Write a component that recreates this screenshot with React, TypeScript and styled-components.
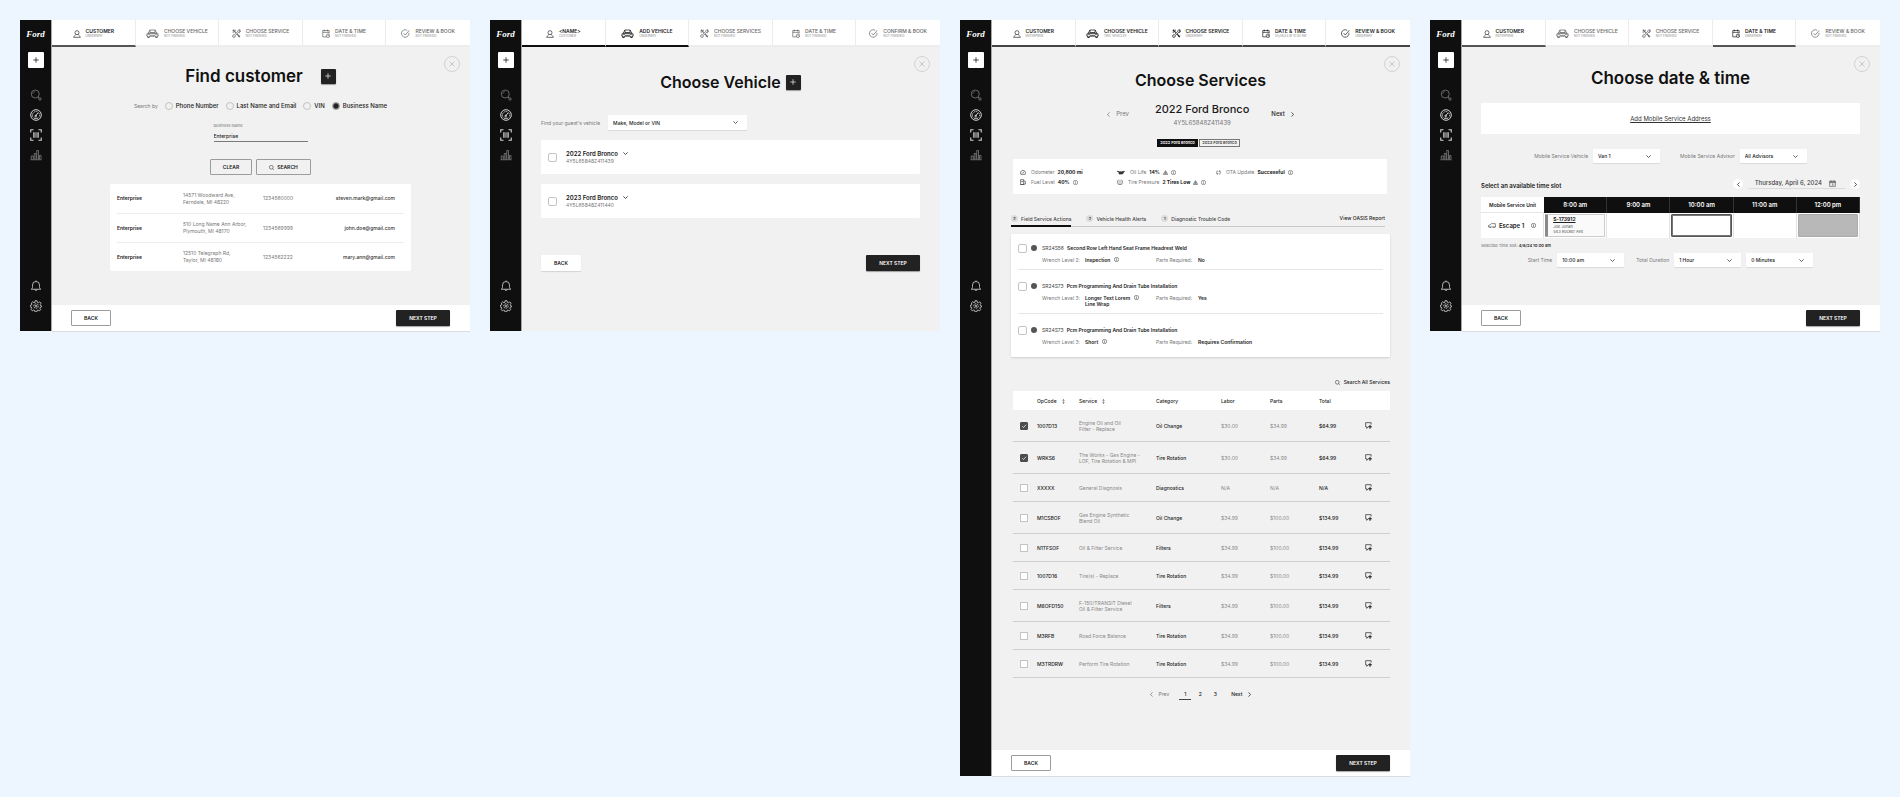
import React from "react";
import styled, { createGlobalStyle, css } from "styled-components";

const GlobalStyle = createGlobalStyle`
  *, *::before, *::after { box-sizing: border-box; }
  body { margin: 0; background: #edf6ff; }
  body, button, input, select, table {
    font-family: Inter, "Liberation Sans", sans-serif;
    font-size: 5px;
    line-height: 6px;
    color: #1a1a1a;
  }
  button { border: 0; padding: 0; margin: 0; background: none; cursor: pointer; }
  svg { display: block; flex: none; }
  h1, h2, h3, p, ul { margin: 0; padding: 0; font-weight: inherit; font-size: inherit; }
`;

/* ---------- icons ---------- */

type IconProps = { w?: number; h?: number; s?: number; sw?: number };

const Icon = ({ w = 12, h = w, s = 24, sw = 1.6, children }: IconProps & { children: React.ReactNode }) => (
  <svg width={w} height={h} viewBox={`0 0 ${(s * w) / h} ${s}`} fill="none" stroke="currentColor" strokeWidth={sw} aria-hidden="true">
    {children}
  </svg>
);

const PlusIcon = () => <Icon w={6} h={6} s={12} sw={1.6}><path d="M6 0.5v11M0.5 6h11" /></Icon>;
const CloseIcon = () => <Icon w={6} h={6} s={12} sw={1.2}><path d="M1 1l10 10M11 1L1 11" /></Icon>;
const SearchIcon = () => (
  <Icon sw={1.4}>
    <circle cx="10.5" cy="10" r="8" />
    <path d="M5.5 10a5 5 0 0 1 5-5" strokeWidth={0.9} />
    <path d="M16 16l2 2" />
    <circle cx="20" cy="20" r="2.4" />
  </Icon>
);
const GaugeIcon = () => (
  <Icon sw={2}>
    <circle cx="12" cy="12" r="10.6" />
    <path d="M6.5 17a7.2 7.2 0 1 1 11 0" strokeDasharray="2.4 1.4" />
    <path d="M11 14l5-6" />
    <circle cx="11.4" cy="14" r="1.6" />
    <path d="M8 18.5h8" />
  </Icon>
);
const ScanIcon = () => (
  <Icon sw={2.2}>
    <path d="M1.5 7V1.5H7M17 1.5h5.5V7M22.5 17v5.500H17M7 22.500H1.500V17" />
    <path d="M7 6.500v11M9.500 6.500v11M12 6.500v11M14.500 6.500v11M17 6.500v11" strokeWidth={1.5} />
  </Icon>
);
const ChartIcon = () => (
  <Icon sw={1.4}>
    <path d="M2.500 21v-7h4v7M8.500 21V9h3.500v12M13.500 21V3h3.500v18M19 21V13h3v8M1 21.500h22" />
  </Icon>
);
const BellIcon = () => (
  <Icon sw={1.6}>
    <path d="M2.500 18.500h19c-2-1.200-2.500-2.500-2.500-5V10a7 7 0 0 0-14 0v3.500c0 2.500-.5 3.800-2.500 5z" />
    <path d="M9.500 19a2.600 2.600 0 0 0 5 0M12 3V1" />
  </Icon>
);
const GearIcon = () => (
  <Icon sw={1.7}>
    <path d="M10 1.500h4l.6 3 2.200 1 2.700-1.700 2.500 2.700-1.600 2.600.9 2.300 2.200.6v1.500l-2.800.8-.9 2.200 1.600 2.600-2.600 2.600-2.600-1.600-2.200.9-.6 3h-3.200l-.7-3-2.200-.9-2.600 1.600-2.500-2.700 1.600-2.500-.9-2.200-3-.7v-2.600l3-.7.9-2.200L2.800 5.900 5.300 3.600l2.600 1.700 2-.9z" />
    <circle cx="12" cy="12" r="4.600" strokeDasharray="3 1.200" />
    <circle cx="12" cy="12" r="1.800" />
  </Icon>
);
const PersonIcon = () => (
  <Icon w={8} sw={2}>
    <circle cx="12" cy="8" r="6" />
    <path d="M8.500 13.500c-1 2-4.500 2.500-6.500 8.500h20c-2-6-5.500-6.500-6.500-8.500" />
  </Icon>
);
const CarIcon = () => (
  <Icon w={13} h={9} s={18} sw={1.500}>
    <path d="M5 8l2.500-6h11L21 8M5 8c-3 0-3.500 2-3.500 6h3M21 8c3 0 3.500 2 3.500 6h-3" />
    <path d="M2.500 10.500h4l1.500 2h10l1.500-2h4M7 14.500h12M8 2v5h10V2" />
    <path d="M3.500 14v3h3v-3M19.500 14v3h3v-3M4 8.500h18" strokeWidth={2} />
  </Icon>
);
const ToolsIcon = () => (
  <Icon w={9} sw={2}>
    <path d="M3 2.500l7 7M14 14l7 7.500M2 5.500L5.500 2" strokeWidth={3} />
    <path d="M15.500 6.500a4.500 4.500 0 0 1 6-4.500l-2.500 3 .5 1.500 2-.3 1.200-1.700a4.500 4.500 0 0 1-6 5L8.500 18a3.500 3.500 0 1 1-2.500-2.500L15.500 6.500z" />
    <path d="M20.500 17.500l-4 4M1.500 8.500h4M8.500 1.500v4" />
  </Icon>
);
const CalendarIcon = () => (
  <Icon w={8} h={9} s={24} sw={1.900}>
    <path d="M12 21H2V4h17v8M2 9h17M6 1.500v5M14.500 1.500v5" />
    <circle cx="16" cy="18" r="4.600" />
    <path d="M16 15.500V18h2" />
  </Icon>
);
const CheckCircleIcon = () => (
  <Icon w={9} sw={1.900}>
    <path d="M21 10a10 10 0 1 1-4.500-6.500" />
    <path d="M7 11l4.500 5L22 3.500" />
  </Icon>
);
const ChevronDown = () => <Icon w={5} h={3} s={6} sw={1.500}><path d="M0.800 0.800L5 5l4.200-4.200" /></Icon>;
const ChevronLeft = () => <Icon w={3} h={5} s={10} sw={1.500}><path d="M5 0.800L1 5l4 4.200" /></Icon>;
const ChevronRight = () => <Icon w={3} h={5} s={10} sw={1.500}><path d="M1 0.800L5 5l-4 4.200" /></Icon>;
const InfoIcon = () => (
  <Icon w={5} s={12} sw={1.200}><circle cx="6" cy="6" r="5.200" /><path d="M6 5v4M6 2.600v1.300" /></Icon>
);
const WarnIcon = () => (
  <Icon w={5} s={12} sw={1.200}><path d="M6 1.500L11.300 10.500H.7z" fill="currentColor" fillOpacity={0.25} /><path d="M6 4.500v3.200M6 8.300v1.200" /></Icon>
);
const LensIcon = () => (
  <Icon w={5} s={12} sw={1.200}><circle cx="5.500" cy="5.500" r="4.500" /><path d="M8.800 8.800L11.500 11.500" /></Icon>
);
const OdometerIcon = () => (
  <Icon w={6} s={14} sw={1.400}><path d="M2 12.500a6 6 0 1 1 10 0zM7 9.500l2.500-3.500M4 9.500h2" /></Icon>
);
const FuelIcon = () => (
  <Icon w={6} s={14} sw={1.500}><path d="M1.500 13V1.500h7V13zM3 6h4M8.500 4l4 1.500V12H9M1 13h8" /></Icon>
);
const OilIcon = () => (
  <Icon w={8} h={5} s={10} sw={1.400}><path d="M1 2l3 1.500h6L15 2.500l-4 5.500H4V4L1 3z" fill="currentColor" /></Icon>
);
const TireIcon = () => (
  <Icon w={6} s={14} sw={1.500}><path d="M4 1.500C.5 4.500 1 10 3.500 12.500h7c2.500-2.500 3-8-.5-11M7 3.500V8M7 9.300v1.400" /></Icon>
);
const UpdateIcon = () => (
  <Icon w={5} s={14} sw={1.600}><path d="M5 1.800a5.400 5.400 0 0 0-1 9.300M9 12.200a5.400 5.400 0 0 0 1-9.300M2 11.500h3V8.500M12 2.500H9v3" /></Icon>
);
const SortIcon = () => (
  <Icon w={3} h={5} s={12} sw={1.300}><path d="M3.600 1v10M1 4l2.600-3L6.200 4M1 8l2.600 3L6.200 8" /></Icon>
);
const NoteIcon = () => (
  <Icon w={7} s={16} sw={1.500}>
    <path d="M14 5.500V1.500H1.500v9.500h2.500v3.500l3-3.500" />
    <path d="M11.500 6.500v8M7.500 10.500h8M9.500 12.500l2 2 2-2" strokeWidth={2} />
  </Icon>
);
const DateIcon = () => (
  <Icon w={7} s={16} sw={1.400}><path d="M1.500 2.500h13v12h-13zM1.500 4.500h13M1.500 6h13M4.500 1v3M11.500 1v3M7 9h2v4" /></Icon>
);
const VanIcon = () => (
  <Icon w={8} h={5} s={12} sw={1.200}><path d="M1 9.500V6l3.500-1L8 1.500h9.500L18 9.500zM4 9.500a1.500 1.500 0 0 0 3 0M13 9.500a1.500 1.500 0 0 0 3 0" /></Icon>
);

/* ---------- shell ---------- */

const Board = styled.main`
  display: grid;
  grid-template-columns: repeat(auto-fit, minmax(420px, 1fr));
  align-items: start;
  gap: 20px;
  padding: 20px;
`;

const Frame = styled.section`
  display: grid;
  grid-template-columns: 32px minmax(0, 1fr);
  background: #f1f1f1;
`;

const Sidebar = styled.aside`
  display: flex;
  flex-direction: column;
  align-items: center;
  padding: 9px 0 19px;
  background: #0f0f0f;
  border-right: 1px solid #a8a8a8;
`;

const Brand = styled.a`
  height: 10px;
  font: italic 700 9px/10px "Liberation Serif", serif;
  color: #fff;
  text-decoration: none;
`;

const SideAdd = styled.button`
  display: grid;
  place-items: center;
  width: 16px;
  height: 16px;
  margin-top: 13px;
  border-radius: 1px;
  background: #fff;
  color: #222;
`;

const SideGroup = styled.nav<{ $top: number }>`
  display: flex;
  flex-direction: column;
  gap: 8px;
  margin-top: ${(p) => p.$top}px;
`;

const SideLink = styled.button<{ $dim?: boolean }>`
  width: 12px;
  height: 12px;
  color: ${(p) => (p.$dim ? "#8a8a8a" : "#d4d4d4")};
`;

const Column = styled.div`
  display: flex;
  flex-direction: column;
`;

const Steps = styled.nav`
  display: grid;
  grid-template-columns: repeat(5, 1fr);
`;

const Step = styled.button<{ $line: string; $on: boolean }>`
  display: flex;
  align-items: center;
  justify-content: center;
  gap: 5px;
  height: 27px;
  padding-top: 2px;
  background: #fff;
  border-right: 1px solid #ececec;
  border-bottom: 2px solid ${(p) => p.$line};
  color: ${(p) => (p.$on ? "#222" : "#666")};
  text-align: left;
  &:last-child { border-right: 0; }
`;

const StepName = styled.span<{ $on: boolean }>`
  display: block;
  font-weight: ${(p) => (p.$on ? 600 : 500)};
  line-height: 6px;
  white-space: nowrap;
`;

const StepNote = styled.span`
  display: block;
  font-size: 3px;
  line-height: 5px;
  color: #888;
`;

const Body = styled.div<{ $top: number; $bottom?: number }>`
  position: relative;
  flex: 1;
  display: flex;
  flex-direction: column;
  align-items: center;
  padding: ${(p) => p.$top}px 20px ${(p) => p.$bottom ?? 0}px 19px;
`;

const CloseButton = styled.button`
  position: absolute;
  top: 9px;
  right: 10px;
  display: grid;
  place-items: center;
  width: 16px;
  height: 16px;
  border: 1px solid #d2d2d2;
  border-radius: 50%;
  color: #aaa;
`;

const TitleRow = styled.div<{ $gap?: number }>`
  display: flex;
  align-items: center;
  gap: ${(p) => p.$gap ?? 0}px;
`;

const Title = styled.h1<{ $large?: boolean }>`
  font-size: ${(p) => (p.$large ? 17 : 16)}px;
  line-height: 20px;
  font-weight: 600;
  color: #111;
  white-space: nowrap;
`;

const DarkAdd = styled.button`
  display: grid;
  place-items: center;
  width: 15px;
  height: 15px;
  border-radius: 1px;
  background: #222;
  color: #ddd;
  box-shadow: 0 1px 1px rgba(0, 0, 0, 0.35);
`;

const Button = styled.button<{ $kind?: "dark" | "plain"; $width: number }>`
  display: inline-flex;
  align-items: center;
  justify-content: center;
  gap: 3px;
  width: ${(p) => p.$width}px;
  height: 16px;
  border-radius: 1px;
  font-weight: 600;
  ${(p) =>
    p.$kind === "dark"
      ? css`background: #222; color: #fff; box-shadow: 0 1px 1px rgba(0, 0, 0, 0.35);`
      : p.$kind === "plain"
        ? css`background: #fff; box-shadow: 0 1px 1px rgba(0, 0, 0, 0.12);`
        : css`background: #fff; border: 1px solid #9c9c9c;`}
`;

const ButtonBar = styled.div<{ $top?: number }>`
  display: flex;
  align-self: stretch;
  justify-content: space-between;
  margin-top: ${(p) => p.$top ?? 0}px;
`;

const Footer = styled.footer`
  display: flex;
  align-items: center;
  justify-content: space-between;
  height: 26px;
  padding: 0 20px 0 19px;
  background: #fff;
  box-shadow: 0 1px 0 #d9dde1;
`;

type StepInfo = { name: string; note: string; on?: boolean; line?: boolean };

const stepIcons = [PersonIcon, CarIcon, ToolsIcon, CalendarIcon, CheckCircleIcon];

function Screen({
  steps, line, top, bottom, footer = true, children,
}: { steps: StepInfo[]; line: string; top: number; bottom?: number; footer?: boolean; children: React.ReactNode }) {
  return (
    <Frame>
      <Sidebar>
        <Brand href="#home">Ford</Brand>
        <SideAdd aria-label="New booking"><PlusIcon /></SideAdd>
        <SideGroup $top={21}>
          <SideLink aria-label="Search" $dim><SearchIcon /></SideLink>
          <SideLink aria-label="Dashboard"><GaugeIcon /></SideLink>
          <SideLink aria-label="Scan"><ScanIcon /></SideLink>
          <SideLink aria-label="Reports" $dim><ChartIcon /></SideLink>
        </SideGroup>
        <SideGroup $top={119}>
          <SideLink aria-label="Notifications"><BellIcon /></SideLink>
          <SideLink aria-label="Settings"><GearIcon /></SideLink>
        </SideGroup>
      </Sidebar>
      <Column>
        <Steps>
          {steps.map((s, i) => {
            const StepIcon = stepIcons[i];
            return (
              <Step key={s.name} $on={!!s.on} $line={s.line ? line : "#ededed"}>
                <StepIcon />
                <span>
                  <StepName $on={!!s.on}>{s.name}</StepName>
                  <StepNote>{s.note}</StepNote>
                </span>
              </Step>
            );
          })}
        </Steps>
        <Body $top={top} $bottom={bottom}>
          <CloseButton aria-label="Close"><CloseIcon /></CloseButton>
          {children}
        </Body>
        {footer && (
          <Footer>
            <Button $width={40}>BACK</Button>
            <Button $kind="dark" $width={54}>NEXT STEP</Button>
          </Footer>
        )}
      </Column>
    </Frame>
  );
}

/* ---------- form parts ---------- */

const Muted = styled.span`
  color: #777;
`;

const Checkbox = styled.input.attrs({ type: "checkbox" })<{ $square?: boolean }>`
  appearance: none;
  display: block;
  flex: none;
  width: ${(p) => (p.$square ? 8 : 9)}px;
  height: ${(p) => (p.$square ? 8 : 9)}px;
  margin: 0;
  background: #fff;
  border: 1px solid #c4c4c4;
  border-radius: ${(p) => (p.$square ? 0 : 2)}px;
  &:checked {
    border-color: #4d4d4d;
    border-radius: 1px;
    background: #4d4d4d url("data:image/svg+xml,%3Csvg xmlns='http://www.w3.org/2000/svg' viewBox='0 0 12 12'%3E%3Cpath d='M2.500 6.500l2.500 2.500L10 3.500' fill='none' stroke='white' stroke-width='1.500'/%3E%3C/svg%3E");
  }
`;

const SelectBox = styled.span<{ $width: number; $height?: number }>`
  display: grid;
  align-items: center;
  width: ${(p) => p.$width}px;
  height: ${(p) => p.$height ?? 14}px;
  background: #fff;
  border-radius: 1px;
  box-shadow: 0 1px 1px rgba(0, 0, 0, 0.1);
  color: #333;
  & > * { grid-area: 1 / 1; }
  & > svg { justify-self: end; margin-right: 9px; pointer-events: none; }
`;

const NativeSelect = styled.select`
  appearance: none;
  width: 100%;
  height: 100%;
  margin: 0;
  padding: 0 5px;
  border: 0;
  background: transparent;
  font-weight: 500;
`;

function Select({ id, value, width, height, label }: { id: string; value: string; width: number; height?: number; label?: string }) {
  return (
    <SelectBox $width={width} $height={height}>
      <NativeSelect id={id} aria-label={label} defaultValue={value}><option>{value}</option></NativeSelect>
      <ChevronDown />
    </SelectBox>
  );
}

const FieldLabel = styled.label`
  color: #777;
  white-space: nowrap;
`;

/* ---------- find customer ---------- */

const SearchBy = styled.fieldset`
  display: flex;
  align-items: center;
  gap: 7px;
  height: 10px;
  margin: 16px 0 0;
  padding: 0;
  border: 0;
`;

const RadioLabel = styled.label`
  display: flex;
  align-items: center;
  gap: 3px;
  font-size: 6px;
  font-weight: 500;
  white-space: nowrap;
`;

const Radio = styled.input.attrs({ type: "radio" })`
  appearance: none;
  width: 8px;
  height: 8px;
  margin: 0;
  border: 1px solid #c2c2c2;
  border-radius: 50%;
  &:checked {
    border-color: #999;
    background: radial-gradient(circle, #222 2px, #777 3px);
  }
`;

const TextField = styled.div`
  display: flex;
  flex-direction: column;
  gap: 2px;
  width: 94px;
  margin-top: 11px;
  & label { font-size: 4px; color: #777; }
  & input {
    height: 11px;
    padding: 0;
    border: 0;
    border-bottom: 1px solid #7a7a7a;
    background: none;
    font-weight: 500;
  }
`;

const ButtonPair = styled.div`
  display: flex;
  gap: 4px;
  margin-top: 17px;
  & button { background: transparent; }
`;

const ResultCard = styled.div`
  align-self: stretch;
  margin: 9px 39px 0;
  padding: 0 7px;
  border-radius: 2px;
  background: #fff;
`;

const ResultTable = styled.table`
  width: 100%;
  table-layout: fixed;
  border-spacing: 0;
  color: #777;
  & td { height: 29px; padding: 0; line-height: 7px; }
  & tr + tr td { border-top: 1px solid #ececec; }
  & td:first-child { font-weight: 600; color: #222; }
  & td:last-child { padding-right: 9px; text-align: right; font-weight: 500; color: #333; }
`;

const customers = [
  ["14571 Woodward Ave,", "Ferndale, MI 48220", "1234560000", "steven.mark@gmail.com"],
  ["510 Long Name Ann Arbor,", "Plymouth, MI 48170", "1234569999", "john.doe@gmail.com"],
  ["12510 Telegraph Rd,", "Taylor, MI 48180", "1234562222", "mary.ann@gmail.com"],
];

const searchModes = ["Phone Number", "Last Name and Email", "VIN", "Business Name"];

function FindCustomer() {
  return (
    <Screen
      top={19}
      line="#555"
      steps={[
        { name: "CUSTOMER", note: "UNDERWAY", on: true, line: true },
        { name: "CHOOSE VEHICLE", note: "NOT FINISHED" },
        { name: "CHOOSE SERVICE", note: "NOT FINISHED" },
        { name: "DATE & TIME", note: "NOT FINISHED" },
        { name: "REVIEW & BOOK", note: "NOT FINISHED" },
      ]}
    >
      <TitleRow $gap={18}>
        <Title $large>Find customer</Title>
        <DarkAdd aria-label="Add customer"><PlusIcon /></DarkAdd>
      </TitleRow>
      <SearchBy>
        <Muted>Search by</Muted>
        {searchModes.map((m) => (
          <RadioLabel key={m}>
            <Radio name="mode" defaultChecked={m === "Business Name"} />
            {m}
          </RadioLabel>
        ))}
      </SearchBy>
      <TextField>
        <label htmlFor="business">Business Name</label>
        <input id="business" defaultValue="Enterprise" />
      </TextField>
      <ButtonPair>
        <Button $width={42}>CLEAR</Button>
        <Button $width={55}><LensIcon />SEARCH</Button>
      </ButtonPair>
      <ResultCard>
        <ResultTable>
          <colgroup><col width="66" /><col width="80" /><col width="60" /><col /></colgroup>
          <tbody>
            {customers.map(([street, city, phone, mail]) => (
              <tr key={mail}>
                <td>Enterprise</td>
                <td>{street}<br />{city}</td>
                <td>{phone}</td>
                <td>{mail}</td>
              </tr>
            ))}
          </tbody>
        </ResultTable>
      </ResultCard>
    </Screen>
  );
}

/* ---------- choose vehicle ---------- */

const FindRow = styled.div`
  display: flex;
  align-self: stretch;
  align-items: center;
  gap: 8px;
  margin-top: 23px;
`;

const VehicleCard = styled.article`
  display: flex;
  align-self: stretch;
  align-items: center;
  gap: 9px;
  height: 34px;
  margin-top: 10px;
  padding: 0 7px;
  border-radius: 1px;
  background: #fff;
`;

const VehicleName = styled.h2`
  display: flex;
  align-items: center;
  gap: 5px;
  font-size: 6px;
  line-height: 8px;
  font-weight: 600;
`;

const SmallVin = styled.p`
  font-size: 5px;
  line-height: 7px;
  color: #777;
`;

function ChooseVehicle() {
  return (
    <Screen
      top={25}
      line="#0f0f0f"
      footer={false}
      steps={[
        { name: "<NAME>", note: "CUSTOMER", on: true, line: true },
        { name: "ADD VEHICLE", note: "UNDERWAY", on: true, line: true },
        { name: "CHOOSE SERVICES", note: "NOT FINISHED" },
        { name: "DATE & TIME", note: "NOT FINISHED" },
        { name: "CONFIRM & BOOK", note: "NOT FINISHED" },
      ]}
    >
      <TitleRow $gap={5}>
        <Title>Choose Vehicle</Title>
        <DarkAdd aria-label="Add vehicle"><PlusIcon /></DarkAdd>
      </TitleRow>
      <FindRow>
        <FieldLabel htmlFor="guest-vehicle">Find your guest's vehicle</FieldLabel>
        <Select id="guest-vehicle" value="Make, Model or VIN" width={139} height={15} />
      </FindRow>
      {[["2022 Ford Bronco", "4Y5L65848Z411439"], ["2023 Ford Bronco", "4Y5L65848Z411440"]].map(([name, vin]) => (
        <VehicleCard key={vin}>
          <Checkbox aria-label={name} />
          <div>
            <VehicleName>{name}<ChevronDown /></VehicleName>
            <SmallVin>{vin}</SmallVin>
          </div>
        </VehicleCard>
      ))}
      <ButtonBar $top={37}>
        <Button $kind="plain" $width={40}>BACK</Button>
        <Button $kind="dark" $width={54}>NEXT STEP</Button>
      </ButtonBar>
    </Screen>
  );
}

/* ---------- choose services ---------- */

const VehicleNav = styled.div`
  display: flex;
  align-items: center;
  gap: 22px;
  margin-top: 11px;
`;

const PagerButton = styled.button<{ $off?: boolean; $large?: boolean }>`
  display: flex;
  align-items: center;
  gap: 6px;
  font-size: ${(p) => (p.$large ? 6 : 5)}px;
  font-weight: ${(p) => (p.$off ? 400 : 500)};
  color: ${(p) => (p.$off ? "#777" : "#222")};
`;

const VehicleHeading = styled.div`
  padding-left: 4px;
  text-align: center;
  & h2 { font-size: 11px; line-height: 16px; font-weight: 500; white-space: nowrap; }
  & p { margin-top: 2px; font-size: 6px; line-height: 8px; color: #777; }
`;

const Chips = styled.div`
  display: flex;
  gap: 1px;
  margin: 12px 4px 0 0;
`;

const Chip = styled.button<{ $on?: boolean }>`
  width: 41px;
  height: 8px;
  border: 1px solid ${(p) => (p.$on ? "#0f0f0f" : "#777")};
  background: ${(p) => (p.$on ? "#0f0f0f" : "transparent")};
  color: ${(p) => (p.$on ? "#fff" : "#444")};
  font-size: 4px;
  line-height: 6px;
  font-weight: 600;
  white-space: nowrap;
`;

const StatCard = styled.div`
  display: grid;
  grid-template-columns: 97px 99px 1fr;
  align-self: stretch;
  grid-auto-rows: 10px;
  height: 35px;
  margin: 12px 3px 0 2px;
  padding: 8px 7px;
  background: #fff;
`;

const Stat = styled.div`
  display: flex;
  align-items: center;
  gap: 3px;
  white-space: nowrap;
  & > svg { color: #333; }
  & > svg:first-child { margin-right: 2px; }
  & strong { font-weight: 700; }
`;

const AlertTabs = styled.div`
  display: flex;
  align-self: stretch;
  gap: 15px;
  height: 15px;
  margin: 18px 5px 0 0;
  border-bottom: 1px solid #c8c8c8;
`;

const AlertTab = styled.button<{ $on?: boolean }>`
  display: flex;
  align-items: center;
  gap: 3px;
  height: 15px;
  border-bottom: 2px solid ${(p) => (p.$on ? "#0f0f0f" : "transparent")};
  font-weight: 500;
  color: #444;
  white-space: nowrap;
`;

const Count = styled.span`
  width: 7px;
  height: 7px;
  border-radius: 50%;
  background: #dcdcdc;
  font-size: 4px;
  line-height: 7px;
  text-align: center;
  color: #222;
`;

const ReportLink = styled.a`
  margin-left: auto;
  font-weight: 500;
  line-height: 13px;
  color: #222;
  text-decoration: none;
`;

const ActionCard = styled.ul`
  align-self: stretch;
  margin-top: 7px;
  padding: 0 7px 6px;
  border-radius: 1px;
  background: #fff;
  box-shadow: 0 1px 2px rgba(0, 0, 0, 0.15);
  list-style: none;
`;

const Action = styled.li`
  display: flex;
  align-items: flex-start;
  gap: 4px;
  padding: 12px 0 6px;
  & + & { border-top: 1px solid #e6e6e6; }
  &:first-child { padding-top: 10px; }
`;

const Dot = styled.span`
  flex: none;
  width: 6px;
  height: 6px;
  margin: 1px 1px 0 0;
  border-radius: 50%;
  background: #555;
`;

const ActionTitle = styled.h3`
  display: flex;
  gap: 3px;
  line-height: 8px;
  font-weight: 600;
  & span { font-weight: 400; color: #444; }
`;

const ActionMeta = styled.div`
  display: grid;
  grid-template-columns: 43px 71px 42px auto;
  margin-top: 5px;
  color: #777;
  & strong { display: flex; gap: 4px; font-weight: 600; color: #222; white-space: pre-line; }
`;

const SearchAll = styled.button`
  display: flex;
  align-self: flex-end;
  align-items: center;
  gap: 4px;
  height: 8px;
  margin-top: 21px;
  font-weight: 500;
`;

const ServiceTable = styled.table`
  align-self: stretch;
  margin: 5px 0 0 2px;
  table-layout: fixed;
  border-spacing: 0;
  & th, & td { padding: 0; text-align: left; }
  & th { height: 19px; background: #fff; font-weight: 500; color: #222; }
  & th svg { display: inline-block; margin-left: 5px; vertical-align: -1px; color: #555; }
  & td { border-bottom: 1px solid #cfcfcf; color: #888; }
  & th:first-child, & td:first-child { padding-left: 7px; }
  & td:nth-child(2), & td:nth-child(4), & td:nth-child(7), & td:last-child { font-weight: 500; color: #222; }
`;

const ServiceRow = styled.tr<{ $tall: boolean }>`
  & td { height: ${(p) => (p.$tall ? 32 : 28)}px; }
`;

const Pager = styled.nav`
  display: flex;
  align-items: center;
  gap: 10px;
  height: 12px;
  margin-top: 10px;
`;

const PageNumbers = styled.div`
  display: flex;
  gap: 3px;
`;

const PageNumber = styled.button<{ $on?: boolean }>`
  width: 12px;
  height: 12px;
  border-bottom: 1px solid ${(p) => (p.$on ? "#444" : "transparent")};
  font-weight: 500;
`;

const services: [string, string[], string, string, string, string][] = [
  ["1007D13", ["Engine Oil and Oil", "Filter - Replace"], "Oil Change", "$30.00", "$34.99", "$64.99"],
  ["WRKS6", ["The Works - Gas Engine -", "LOF, Tire Rotation & MPI"], "Tire Rotation", "$30.00", "$34.99", "$64.99"],
  ["XXXXX", ["General Diagnosis"], "Diagnostics", "N/A", "N/A", "N/A"],
  ["M1CSBOF", ["Gas Engine Synthetic", "Blend Oil"], "Oil Change", "$34.99", "$100.00", "$134.99"],
  ["N1TFSOF", ["Oil & Filter Service"], "Filters", "$34.99", "$100.00", "$134.99"],
  ["1007D16", ["Tire(s) - Replace"], "Tire Rotation", "$34.99", "$100.00", "$134.99"],
  ["M6OFD150", ["F-150/TRANSIT Diesel", "Oil & Filter Service"], "Filters", "$34.99", "$100.00", "$134.99"],
  ["M3RFB", ["Road Force Balance"], "Tire Rotation", "$34.99", "$100.00", "$134.99"],
  ["M3TRDRW", ["Perform Tire Rotation"], "Tire Rotation", "$34.99", "$100.00", "$134.99"],
];

const actions = [
  { code: "SR24S56", title: "Second Row Left Hand Seat Frame Headrest Weld", level: 2, kind: "Inspection", parts: "No" },
  { code: "SR24S73", title: "Pcm Programming And Drain Tube Installation", level: 3, kind: "Longer Text Lorem\nLine Wrap", parts: "Yes" },
  { code: "SR24S73", title: "Pcm Programming And Drain Tube Installation", level: 3, kind: "Short", parts: "Requires Confirmation" },
];

function ChooseServices() {
  return (
    <Screen
      top={23}
      bottom={50}
      line="#444"
      steps={[
        { name: "CUSTOMER", note: "ENTERPRISE", on: true, line: true },
        { name: "CHOOSE VEHICLE", note: "TWO VEHICLES", on: true, line: true },
        { name: "CHOOSE SERVICE", note: "UNDERWAY", on: true, line: true },
        { name: "DATE & TIME", note: "04/06/24 @ 10:00 AM", on: true, line: true },
        { name: "REVIEW & BOOK", note: "UNDERWAY", on: true, line: true },
      ]}
    >
      <Title>Choose Services</Title>
      <VehicleNav>
        <PagerButton $off $large><ChevronLeft />Prev</PagerButton>
        <VehicleHeading>
          <h2>2022 Ford Bronco</h2>
          <p>4Y5L65848Z411439</p>
        </VehicleHeading>
        <PagerButton $large>Next<ChevronRight /></PagerButton>
      </VehicleNav>
      <Chips>
        <Chip $on>2022 Ford Bronco</Chip>
        <Chip>2023 Ford Bronco</Chip>
      </Chips>
      <StatCard>
        <Stat><OdometerIcon /><Muted>Odometer</Muted><strong>20,800 mi</strong></Stat>
        <Stat><OilIcon /><Muted>Oil Life</Muted><strong>14%</strong><WarnIcon /><InfoIcon /></Stat>
        <Stat><UpdateIcon /><Muted>OTA Update</Muted><strong>Successful</strong><InfoIcon /></Stat>
        <Stat><FuelIcon /><Muted>Fuel Level</Muted><strong>40%</strong><InfoIcon /></Stat>
        <Stat><TireIcon /><Muted>Tire Pressure</Muted><strong>2 Tires Low</strong><WarnIcon /><InfoIcon /></Stat>
      </StatCard>
      <AlertTabs>
        <AlertTab $on><Count>2</Count>Field Service Actions</AlertTab>
        <AlertTab><Count>2</Count>Vehicle Health Alerts</AlertTab>
        <AlertTab><Count>1</Count>Diagnostic Trouble Code</AlertTab>
        <ReportLink href="#oasis">View OASIS Report</ReportLink>
      </AlertTabs>
      <ActionCard>
        {actions.map((a, i) => (
          <Action key={i}>
            <Checkbox aria-label={a.title} />
            <Dot />
            <div>
              <ActionTitle><span>{a.code}</span>{a.title}</ActionTitle>
              <ActionMeta>
                <span>Wrench Level {a.level}:</span>
                <strong>{a.kind}<InfoIcon /></strong>
                <span>Parts Required:</span>
                <strong>{a.parts}</strong>
              </ActionMeta>
            </div>
          </Action>
        ))}
      </ActionCard>
      <SearchAll><LensIcon />Search All Services</SearchAll>
      <ServiceTable>
        <colgroup>
          <col width="24" /><col width="42" /><col width="77" /><col width="65" />
          <col width="49" /><col width="49" /><col width="46" /><col />
        </colgroup>
        <thead>
          <tr>
            <th aria-label="Selected" />
            <th>OpCode<SortIcon /></th>
            <th>Service<SortIcon /></th>
            <th>Category</th>
            <th>Labor</th>
            <th>Parts</th>
            <th>Total</th>
            <th aria-label="Notes" />
          </tr>
        </thead>
        <tbody>
          {services.map(([code, name, category, labor, parts, total], i) => (
            <ServiceRow key={code} $tall={name.length > 1}>
              <td><Checkbox $square defaultChecked={i < 2} aria-label={code} /></td>
              <td>{code}</td>
              <td>{name[0]}{name[1] && <><br />{name[1]}</>}</td>
              <td>{category}</td>
              <td>{labor}</td>
              <td>{parts}</td>
              <td>{total}</td>
              <td><button aria-label={`Add note to ${code}`}><NoteIcon /></button></td>
            </ServiceRow>
          ))}
        </tbody>
      </ServiceTable>
      <Pager>
        <PagerButton $off><ChevronLeft />Prev</PagerButton>
        <PageNumbers>
          <PageNumber $on>1</PageNumber>
          <PageNumber>2</PageNumber>
          <PageNumber>3</PageNumber>
        </PageNumbers>
        <PagerButton>Next<ChevronRight /></PagerButton>
      </Pager>
    </Screen>
  );
}

/* ---------- choose date & time ---------- */

const AddressCard = styled.div`
  display: grid;
  align-self: stretch;
  place-items: center;
  height: 31px;
  margin-top: 15px;
  border-radius: 1px;
  background: #fff;
  & a { color: #333; font-size: 6px; font-weight: 400; text-underline-offset: 1px; }
`;

const SelectRow = styled.div<{ $top: number; $gap: number }>`
  display: flex;
  align-items: center;
  gap: ${(p) => p.$gap}px;
  margin-top: ${(p) => p.$top}px;
`;

const LabeledSelect = styled.div`
  display: flex;
  align-items: center;
  gap: 5px;
`;

const DateBar = styled.div`
  display: flex;
  align-self: stretch;
  align-items: flex-end;
  gap: 5px;
  margin-top: 15px;
  & h2 { margin-right: auto; font-size: 6px; line-height: 6px; font-weight: 600; }
`;

const RoundButton = styled.button`
  display: grid;
  place-items: center;
  width: 10px;
  height: 10px;
  border-radius: 50%;
  background: #fff;
`;

const DateButton = styled.button`
  display: flex;
  align-items: center;
  justify-content: flex-end;
  gap: 7px;
  width: 97px;
  height: 11px;
  padding-right: 9px;
  border-bottom: 1px solid #dcdcdc;
  font-size: 6px;
  font-weight: 500;
  white-space: nowrap;
  color: #444;
`;

const SlotTable = styled.table`
  width: 100%;
  margin-top: 8px;
  table-layout: fixed;
  border-spacing: 0;
  & th { height: 16px; padding: 0; background: #0f0f0f; color: #fff; font-size: 6px; font-weight: 600; border-right: 1px solid #333; }
  & th:first-child { background: #fff; color: #222; font-size: 5px; border-bottom: 1px solid #e6e6e6; border-right: 0; }
  & td { height: 25px; padding: 1px; background: #fff; border-right: 1px solid #e2e2e2; }
`;

const Unit = styled.div`
  display: flex;
  align-items: center;
  justify-content: center;
  gap: 3px;
  font-size: 6px;
  font-weight: 600;
  & svg:last-child { margin-left: 4px; }
`;

const Slot = styled.button<{ $kind?: "picked" | "blocked" }>`
  display: block;
  width: 100%;
  height: 23px;
  ${(p) => p.$kind === "picked" && css`border: 1px solid #555; outline: 1px solid #777; outline-offset: -2px; border-radius: 1px;`}
  ${(p) => p.$kind === "blocked" && css`background: #b8b8b8; border: 1px solid #aaa; border-radius: 1px;`}
`;

const Booking = styled.article`
  height: 23px;
  padding: 2px 0 0 5px;
  border: 1px solid #ccc;
  border-left: 3px solid #8a8a8a;
  border-radius: 1px;
  background: #fafafa;
  font-size: 4px;
  line-height: 5px;
  color: #555;
  & a { display: block; margin-bottom: 2px; font-size: 5px; font-weight: 700; color: #222; }
`;

const Picked = styled.p`
  align-self: flex-start;
  margin-top: 5px;
  font-size: 4px;
  color: #666;
  & strong { font-weight: 600; color: #222; }
`;

function ChooseDate() {
  return (
    <Screen
      top={21}
      line="#555"
      steps={[
        { name: "CUSTOMER", note: "ENTERPRISE", on: true, line: true },
        { name: "CHOOSE VEHICLE", note: "NOT FINISHED" },
        { name: "CHOOSE SERVICE", note: "NOT FINISHED" },
        { name: "DATE & TIME", note: "UNDERWAY", on: true, line: true },
        { name: "REVIEW & BOOK", note: "NOT FINISHED" },
      ]}
    >
      <Title $large>Choose date &amp; time</Title>
      <AddressCard><a href="#address">Add Mobile Service Address</a></AddressCard>
      <SelectRow $top={15} $gap={20}>
        <LabeledSelect>
          <FieldLabel htmlFor="van">Mobile Service Vehicle</FieldLabel>
          <Select id="van" value="Van 1" width={67} />
        </LabeledSelect>
        <LabeledSelect>
          <FieldLabel htmlFor="advisor">Mobile Service Advisor</FieldLabel>
          <Select id="advisor" value="All Advisors" width={67} />
        </LabeledSelect>
      </SelectRow>
      <DateBar>
        <h2>Select an available time slot</h2>
        <RoundButton aria-label="Previous day"><ChevronLeft /></RoundButton>
        <DateButton>Thursday, April 6, 2024<DateIcon /></DateButton>
        <RoundButton aria-label="Next day"><ChevronRight /></RoundButton>
      </DateBar>
      <SlotTable>
        <thead>
          <tr>
            <th>Mobile Service Unit</th>
            <th>8:00 am</th>
            <th>9:00 am</th>
            <th>10:00 am</th>
            <th>11:00 am</th>
            <th>12:00 pm</th>
          </tr>
        </thead>
        <tbody>
          <tr>
            <td><Unit><VanIcon />Escape 1<InfoIcon /></Unit></td>
            <td>
              <Booking>
                <a href="#booking">S-173912</a>
                Joe Jonah<br />543 Rocker Ave
              </Booking>
            </td>
            <td><Slot aria-label="9:00 am" /></td>
            <td><Slot aria-label="10:00 am" $kind="picked" /></td>
            <td><Slot aria-label="11:00 am" /></td>
            <td><Slot aria-label="12:00 pm" $kind="blocked" disabled /></td>
          </tr>
        </tbody>
      </SlotTable>
      <Picked>Selected Time Slot: <strong>4/6/24 10:00 am</strong></Picked>
      <SelectRow $top={4} $gap={12}>
        <LabeledSelect>
          <FieldLabel htmlFor="start">Start Time</FieldLabel>
          <Select id="start" value="10:00 am" width={67} />
        </LabeledSelect>
        <LabeledSelect>
          <FieldLabel htmlFor="hours">Total Duration</FieldLabel>
          <Select id="hours" value="1 Hour" width={67} />
          <Select id="minutes" value="0 Minutes" width={67} label="Minutes" />
        </LabeledSelect>
      </SelectRow>
    </Screen>
  );
}

export default function App() {
  return (
    <>
      <GlobalStyle />
      <Board>
        <FindCustomer />
        <ChooseVehicle />
        <ChooseServices />
        <ChooseDate />
      </Board>
    </>
  );
}
